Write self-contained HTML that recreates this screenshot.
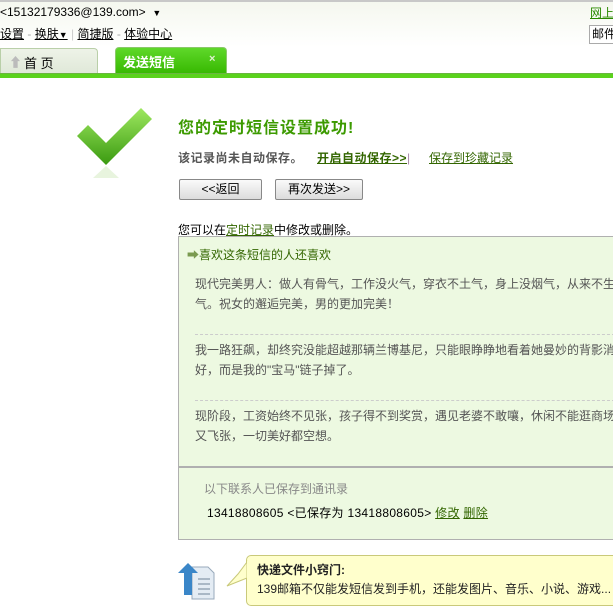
<!DOCTYPE html>
<html><head><meta charset="utf-8"><style>
body{margin:0;width:613px;height:605px;overflow:hidden;background:#fff;font-family:"Liberation Sans","Noto Sans CJK SC",sans-serif;font-size:12px;color:#000;position:relative}
.a{position:absolute;white-space:nowrap}
u{text-decoration:underline}
.g{color:#336600}
</style></head><body>
<div class="a" style="left:0;top:0;width:613px;height:47px;background:linear-gradient(#f4f7ee,#fff)"></div>
<div class="a" style="left:0;top:0;width:613px;height:2px;background:#c8c8c8"></div>
<div class="a" style="left:0;top:5px;font-size:12px">&lt;15132179336@139.com&gt; &nbsp;<span style="font-size:9px">▼</span></div>
<div class="a" style="left:590px;top:4px;color:#2a8a00"><u>网上</u></div>
<div class="a" style="left:589px;top:25px;width:30px;height:17px;border:1px solid #aaa;background:#fff;line-height:17px;padding-left:2px">邮件</div>
<div class="a" style="left:0;top:25px"><u>设置</u> <span style="color:#aaa">-</span> <u>换肤<span style="font-size:9px">▼</span></u> <span style="color:#ccc">|</span> <u>简捷版</u> <span style="color:#aaa">-</span> <u>体验中心</u></div>
<div class="a" style="left:0;top:48px;width:96px;height:25px;background:linear-gradient(#eef3e8,#dfe8d8);border:1px solid #b9cfa8;border-bottom:none;border-radius:0 4px 0 0"></div>
<div class="a" style="left:9px;top:52px;color:#bbb;font-size:13px">⬆</div>
<div class="a" style="left:24px;top:53px;font-size:13px">首 页</div>
<div class="a" style="left:115px;top:47px;width:110px;height:26px;background:linear-gradient(#5fd82a,#36b800);border:1px solid #8ac86a;border-bottom:none;border-radius:4px 4px 0 0"></div>
<div class="a" style="left:123px;top:52px;color:#fff;font-weight:bold;font-size:13px">发送短信</div>
<div class="a" style="left:209px;top:53px;color:#e0f0d0;font-size:11px;font-weight:bold">×</div>
<div class="a" style="left:0;top:73px;width:613px;height:1px;background:#6ab640"></div>
<div class="a" style="left:0;top:74px;width:613px;height:4px;background:#5ad21c"></div>
<svg class="a" style="left:77px;top:108px" width="78" height="80" viewBox="0 0 78 80">
<defs><linearGradient id="cg" x1="0" y1="0" x2="0" y2="1"><stop offset="0" stop-color="#9ee860"/><stop offset="1" stop-color="#3a9a10"/></linearGradient></defs>
<path d="M0 28 L11 17 L29 35 L64 0 L75 11 L29 57 Z" fill="url(#cg)"/>
<path d="M16 70 L29 58 L42 70 Z" fill="#d8ecc8" opacity=".6"/>
</svg>
<div class="a" style="left:178px;top:114px;font-size:16px;font-weight:bold;color:#3c9a00;letter-spacing:1px">您的定时短信设置成功!</div>
<div class="a" style="left:178px;top:149px;font-weight:bold;color:#555;letter-spacing:.5px">该记录尚未自动保存。</div>
<div class="a" style="left:317px;top:149px;font-weight:bold;color:#336600;letter-spacing:.5px"><u>开启自动保存&gt;&gt;</u><span style="color:#a8a;font-weight:normal">|</span></div>
<div class="a g" style="left:429px;top:149px"><u>保存到珍藏记录</u></div>
<div class="a" style="left:179px;top:179px;width:81px;height:19px;border:1px solid #888;border-radius:2px;background:linear-gradient(#fafafa,#dcdcdc);text-align:center;line-height:19px">&lt;&lt;返回</div>
<div class="a" style="left:275px;top:179px;width:86px;height:19px;border:1px solid #888;border-radius:2px;background:linear-gradient(#fafafa,#dcdcdc);text-align:center;line-height:19px">再次发送&gt;&gt;</div>
<div class="a" style="left:178px;top:221px">您可以在<u class="g">定时记录</u>中修改或删除。</div>
<div class="a" style="left:178px;top:236px;width:440px;height:229px;background:#edf9e1;border:1px solid #b0b0b0;border-right:none"></div>
<div class="a" style="left:187px;top:246px;color:#336600"><span style="color:#7a9a50">➡</span>喜欢这条短信的人还喜欢</div>
<div class="a" style="left:195px;top:274px;color:#555;line-height:20px">现代完美男人：做人有骨气，工作没火气，穿衣不土气，身上没烟气，从来不生<br>气。祝女的邂逅完美，男的更加完美！</div>
<div class="a" style="left:195px;top:334px;width:420px;border-top:1px dashed #ccc"></div>
<div class="a" style="left:195px;top:340px;color:#555;line-height:20px">我一路狂飙，却终究没能超越那辆兰博基尼，只能眼睁睁地看着她曼妙的背影消<br>好，而是我的"宝马"链子掉了。</div>
<div class="a" style="left:195px;top:400px;width:420px;border-top:1px dashed #ccc"></div>
<div class="a" style="left:195px;top:406px;color:#555;line-height:20px">现阶段，工资始终不见张，孩子得不到奖赏，遇见老婆不敢嚷，休闲不能逛商场<br>又飞张，一切美好都空想。</div>
<div class="a" style="left:178px;top:467px;width:440px;height:71px;background:#edf9e1;border:1px solid #b0b0b0;border-right:none"></div>
<div class="a" style="left:204px;top:480px;color:#888">以下联系人已保存到通讯录</div>
<div class="a" style="left:207px;top:504px;letter-spacing:.3px">13418808605 &lt;已保存为 13418808605&gt; <u class="g">修改</u> <u class="g">删除</u></div>
<svg class="a" style="left:178px;top:563px" width="40" height="40" viewBox="0 0 40 40">
<path d="M14 4 H30 L36 10 V36 H14 Z" fill="#e4ecf4" stroke="#9ab" stroke-width="1"/>
<path d="M20 16H32M20 21H32M20 26H32M20 31H32" stroke="#89a" stroke-width="1.2"/>
<path d="M10 0 L20 10 H14 V32 H6 V10 H0 Z" fill="#3a86c8"/>
</svg>
<div class="a" style="left:246px;top:555px;width:380px;height:49px;background:#ffffcc;border:1px solid #c9c97a;border-radius:5px"></div>
<svg class="a" style="left:226px;top:560px" width="22" height="30"><path d="M21 2 L21 18 L1 26 L12 14 Z" fill="#ffffcc" stroke="#c9c97a"/><rect x="21" y="1" width="2" height="26" fill="#ffffcc"/></svg>
<div class="a" style="left:257px;top:561px;font-weight:bold;color:#222">快递文件小窍门:</div>
<div class="a" style="left:257px;top:580px;color:#222">139邮箱不仅能发短信发到手机，还能发图片、音乐、小说、游戏...</div>
</body></html>
